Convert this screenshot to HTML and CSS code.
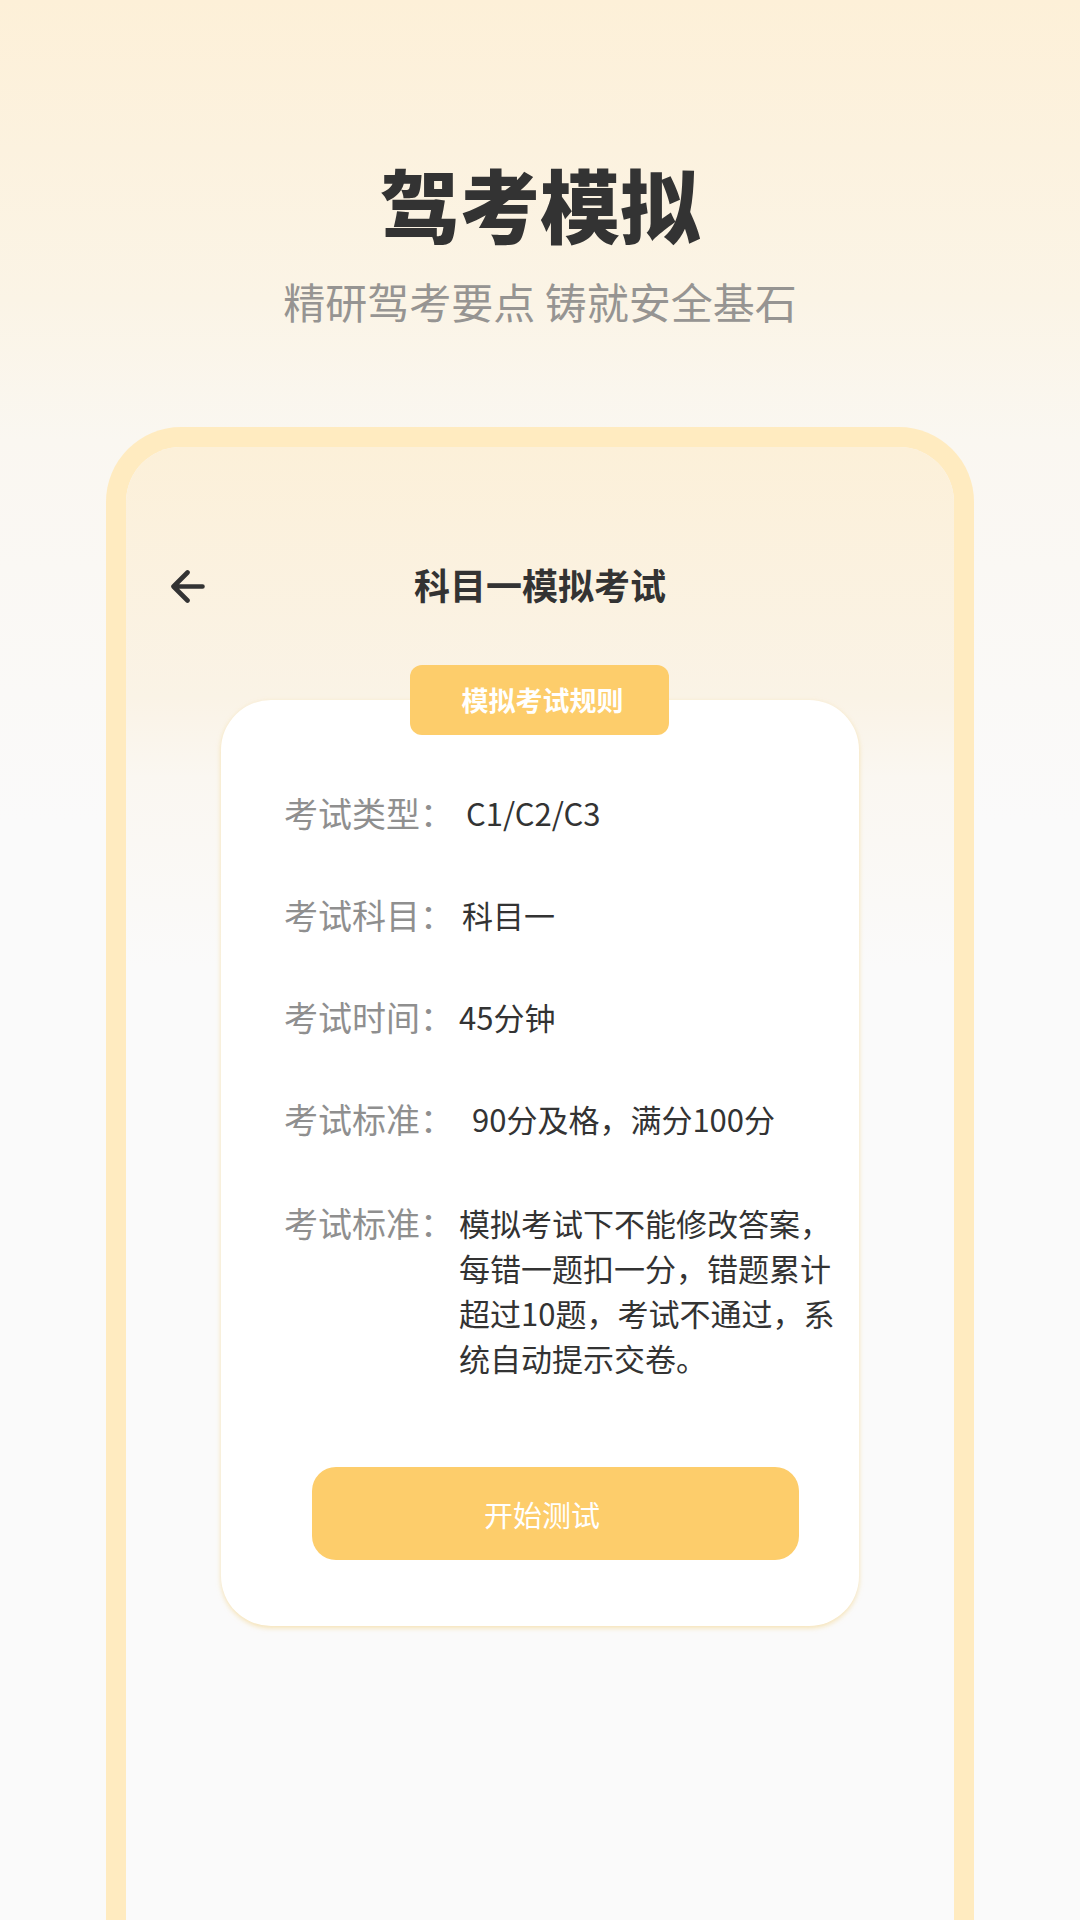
FILE: index.html
```html
<!DOCTYPE html>
<html lang="zh-CN">
<head>
<meta charset="utf-8">
<title>驾考模拟</title>
<link rel="stylesheet" href="styles.css">
</head>
<body>
<div class="page">
  <header class="hero">
    <h1 class="hero-title">驾考模拟</h1>
    <p class="hero-sub">精研驾考要点 铸就安全基石</p>
  </header>

  <section class="frame">
    <div class="frame-inner">
      <div class="topbar">
        <span class="back">
          <svg viewBox="0 0 34 34" width="34" height="34" aria-hidden="true">
            <path d="M31.5 16.5H3M16.5 2.5L2.5 16.5L16.5 30.5" fill="none" stroke="#333" stroke-width="4.6" stroke-linecap="round" stroke-linejoin="round"/>
          </svg>
        </span>
        <h2 class="topbar-title">科目一模拟考试</h2>
        <span class="topbar-spacer"></span>
      </div>

      <div class="card">
        <div class="badge">模拟考试规则</div>
        <div class="rows">
          <div class="row">
            <span class="label">考试类型：</span>
            <span class="value indent-s">C1/C2/C3</span>
          </div>
          <div class="row">
            <span class="label">考试科目：</span>
            <span class="value indent-xs">科目一</span>
          </div>
          <div class="row">
            <span class="label">考试时间：</span>
            <span class="value">45分钟</span>
          </div>
          <div class="row">
            <span class="label">考试标准：</span>
            <span class="value indent-m">90分及格，满分100分</span>
          </div>
          <div class="row row-long">
            <span class="label">考试标准：</span>
            <span class="value">模拟考试下不能修改答案，每错一题扣一分，错题累计超过10题，考试不通过，系统自动提示交卷。</span>
          </div>
        </div>
        <button class="start" type="button">开始测试</button>
      </div>
    </div>
  </section>
</div>
</body>
</html>
```

FILE: styles.css
```css
* {
  box-sizing: border-box;
}

html, body {
  margin: 0;
  padding: 0;
}

body {
  width: 1080px;
  height: 1920px;
  overflow: hidden;
  font-family: "Noto Sans CJK SC", "Noto Sans", sans-serif;
  color: #333333;
  background: #fafafa;
}

.page {
  width: 1080px;
  height: 1920px;
  overflow: hidden;
  background: linear-gradient(180deg, #fdf0d8 0px, #fbf4e6 300px, #faf7f1 440px, #fafafa 820px);
}

.hero {
  padding-top: 154px;
  display: flex;
  flex-direction: column;
  align-items: center;
}

.hero-title {
  margin: 0;
  font-size: 80px;
  line-height: 96px;
  font-weight: 900;
  color: #333333;
  letter-spacing: 0;
}

.hero-sub {
  margin: 26px 0 0;
  font-size: 42px;
  line-height: 50px;
  font-weight: 400;
  color: #969492;
}

.frame {
  margin: 101px auto 0;
  width: 868px;
  height: 1700px;
  border: 20px solid #ffebc0;
  border-radius: 75px 75px 0 0;
  border-bottom: none;
  overflow: hidden;
}

.frame-inner {
  height: 100%;
  background: linear-gradient(180deg, #fcf0d9 0px, #faf3e6 250px, #faf7f1 330px, #fafafa 520px);
  padding-top: 104px;
}

.topbar {
  display: grid;
  grid-template-columns: 1fr auto 1fr;
  align-items: center;
  height: 72px;
  padding: 0 45px;
}

.back {
  display: flex;
  align-items: center;
  justify-self: start;
  width: 34px;
  height: 34px;
}

.back svg {
  display: block;
}

.topbar-title {
  margin: 0;
  font-size: 36px;
  line-height: 72px;
  font-weight: 700;
  color: #333333;
  position: relative;
  top: -3px;
}

.card {
  position: relative;
  width: 638px;
  margin: 77px auto 0;
  background: #ffffff;
  border-radius: 50px;
  box-shadow: 0 2px 5px rgba(243, 205, 120, 0.55);
  padding: 90px 20px 66px 63px;
}

.badge {
  position: absolute;
  top: -35px;
  left: 189px;
  width: 259px;
  height: 70px;
  border-radius: 12px;
  background: #fdcd6b;
  color: #ffffff;
  font-size: 27px;
  font-weight: 700;
  line-height: 70px;
  text-align: center;
  padding-left: 6px;
}

.rows {
  display: flex;
  flex-direction: column;
  gap: 56px;
}

.row {
  display: flex;
  align-items: flex-start;
}

.row-long {
  margin-top: 2px;
}

.label {
  flex: none;
  width: 170px;
  font-size: 34px;
  line-height: 46px;
  color: #8f8f8f;
}

.value {
  flex: 1;
  margin-left: 5px;
  font-size: 31px;
  line-height: 45px;
  color: #333333;
}

.indent-xs {
  padding-left: 3px;
}

.indent-s {
  padding-left: 7px;
}

.indent-m {
  padding-left: 13px;
}

.start {
  display: block;
  margin: 87px 0 0 28px;
  width: 487px;
  height: 93px;
  border: none;
  border-radius: 24px;
  background: #fdcd6b;
  color: #ffffff;
  font-family: "Noto Sans CJK SC", "Noto Sans", sans-serif;
  font-size: 29px;
  font-weight: 400;
  padding: 0 27px 0 0;
  text-align: center;
}
```
